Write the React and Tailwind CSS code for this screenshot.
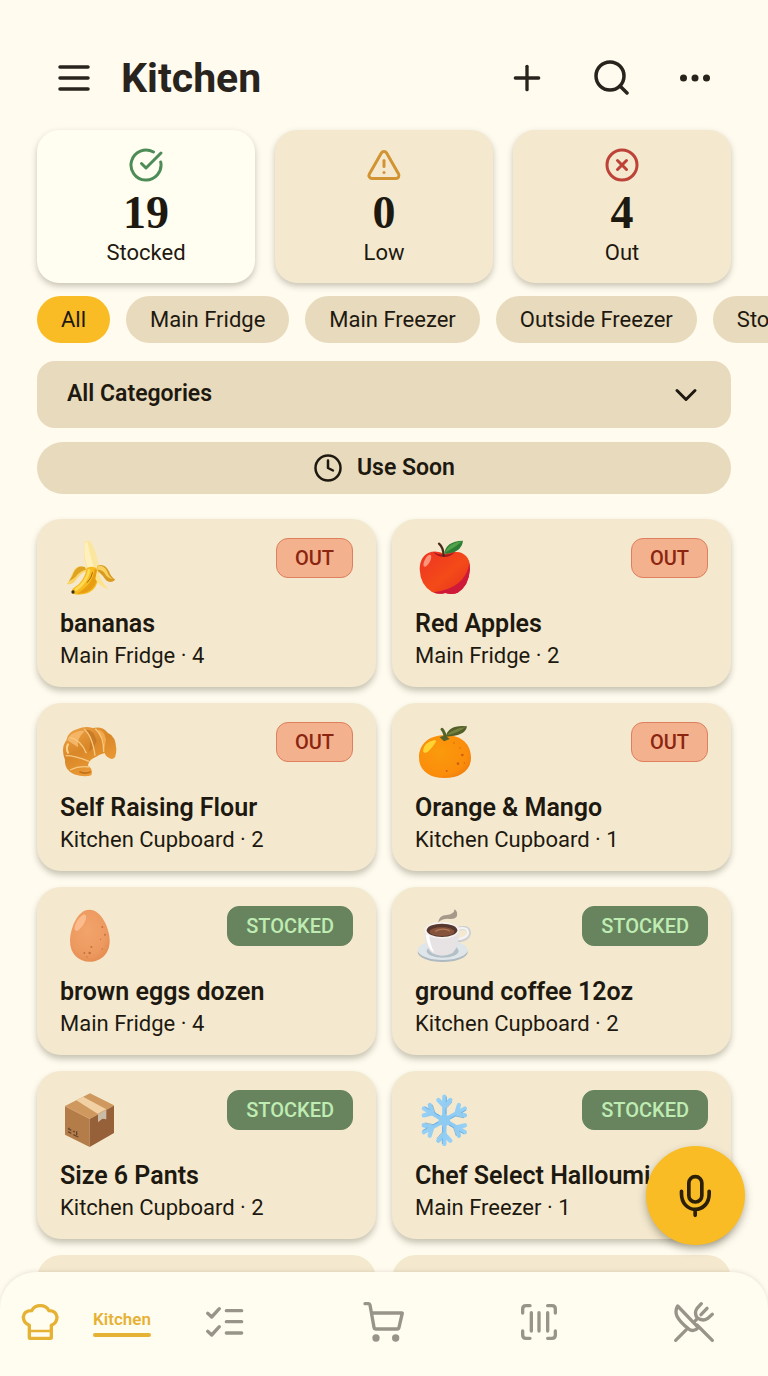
import { useState } from "react";
import { ChevronDown, CircleCheckBig, CircleX, Clock, Plus, TriangleAlert } from "lucide-react";

const stats = [
  { label: "Stocked", value: 19, icon: CircleCheckBig, card: "bg-[#fffef1]", color: "text-[#4d8c57]" },
  { label: "Low", value: 0, icon: TriangleAlert, card: "bg-[#f4e9cf]", color: "text-[#d29432]" },
  { label: "Out", value: 4, icon: CircleX, card: "bg-[#f4e9cf]", color: "text-[#bd4237]" },
];

const places = ["All", "Main Fridge", "Main Freezer", "Outside Freezer", "Storage"];

const items = [
  { name: "bananas", place: "Main Fridge", count: 4, status: "OUT", art: Banana },
  { name: "Red Apples", place: "Main Fridge", count: 2, status: "OUT", art: Apple },
  { name: "Self Raising Flour", place: "Kitchen Cupboard", count: 2, status: "OUT", art: Croissant },
  { name: "Orange & Mango", place: "Kitchen Cupboard", count: 1, status: "OUT", art: Orange },
  { name: "brown eggs dozen", place: "Main Fridge", count: 4, status: "STOCKED", art: Egg },
  { name: "ground coffee 12oz", place: "Kitchen Cupboard", count: 2, status: "STOCKED", art: Coffee },
  { name: "Size 6 Pants", place: "Kitchen Cupboard", count: 2, status: "STOCKED", art: Parcel },
  { name: "Chef Select Halloumi", place: "Main Freezer", count: 1, status: "STOCKED", art: Snowflake },
];

const badgeStyles = {
  OUT: "border-[#dc8060] bg-[#f4b18d] text-[#8b2511]",
  STOCKED: "border-[#67845f] bg-[#67845f] text-[#bfecb2]",
};

function Banana() {
  return (
    <svg viewBox="90 84 180 180" className="size-15" aria-hidden="true">
      <path d="M163 101Q164 92 174 91Q182 91 186 102Q202 132 207 172L173 184Q157 145 163 101Z" fill="#fbe6a0" />
      <path d="M172 94Q178 128 191 172L176 180Q160 140 164 101Z" fill="#fff0bd" />
      <path d="M165 173Q140 160 127 190Q119 214 110 222Q128 226 141 206Q152 190 170 182Z" fill="#fbd469" />
      <path d="M165 171Q144 164 133 184Q124 205 116 214Q132 208 143 193Q154 181 168 179Z" fill="#dda321" />
      <path d="M170 174Q164 213 134 232Q122 240 127 249Q133 256 158 253Q211 244 205 179Q191 164 170 174Z" fill="#f7bb22" />
      <path d="M194 176Q190 222 141 251Q202 253 205 183Z" fill="#e89e12" />
      <path d="M178 178Q171 218 136 240" fill="none" stroke="#ffdb55" strokeWidth="8" />
      <path d="M188 187Q184 206 171 218" fill="none" stroke="#a76c0b" strokeWidth="3" />
      <path d="M202 176Q212 216 236 238Q209 231 196 207Z" fill="#ffe28b" />
      <path d="M201 168Q223 158 237 184Q243 202 256 209Q241 222 228 211Q219 196 203 182Z" fill="#d89b20" />
      <path d="M202 168Q222 164 231 184Q237 202 249 208Q232 205 224 190Q216 178 203 179Z" fill="#fad15f" />
      <circle cx="129" cy="246" r="5" fill="#3d3013" />
    </svg>
  );
}

function Apple() {
  return (
    <svg viewBox="90 84 180 180" className="size-15" aria-hidden="true">
      <defs>
        <linearGradient id="apple" x1="0" y1="0" x2="1" y2="1">
          <stop offset="0" stopColor="#ed3324" />
          <stop offset="0.55" stopColor="#f44a18" />
          <stop offset="1" stopColor="#e42e20" />
        </linearGradient>
      </defs>
      <path d="M178 132Q198 121 224 127Q257 138 255 178Q251 229 218 248Q201 255 181 249Q159 255 141 246Q106 226 104 178Q104 135 140 125Q163 122 178 132Z" fill="url(#apple)" />
      <path d="M253 159Q242 235 145 247Q162 255 181 249Q201 255 218 248Q251 229 255 178Z" fill="#cf193b" />
      <path d="M145 126Q176 143 210 126Q196 142 176 141Q155 140 145 126Z" fill="#a71920" />
      <ellipse cx="127" cy="152" rx="8" ry="20" transform="rotate(28 127 152)" fill="#ff9578" />
      <path d="M176 137Q175 112 162 101" fill="none" stroke="#4a2b19" strokeWidth="7" strokeLinecap="round" />
      <path d="M178 131Q181 94 234 92Q229 130 178 131Z" fill="#2d7d35" />
      <path d="M180 128Q191 98 232 94Q210 113 180 128Z" fill="#52a24a" />
    </svg>
  );
}

function Croissant() {
  return (
    <svg viewBox="90 638 180 180" className="size-15" aria-hidden="true">
      <defs>
        <linearGradient id="crust" x1="0" y1="0" x2="0.6" y2="1">
          <stop offset="0" stopColor="#efa64a" />
          <stop offset="0.5" stopColor="#d98728" />
          <stop offset="1" stopColor="#ee9e38" />
        </linearGradient>
      </defs>
      <path d="M184 798Q162 805 132 795Q103 782 105 752Q91 716 109 693Q112 668 142 659Q166 649 188 656Q219 650 233 670Q258 680 259 720Q259 750 245 749Q228 745 224 731Q208 735 196 744Q176 752 174 769Q190 778 184 798Z" fill="url(#crust)" />
      <path d="M112 693Q116 674 141 667Q153 662 164 665Q138 690 144 714Q123 700 112 693Z" fill="#f5b566" />
      <path d="M168 661Q190 659 200 694Q192 718 175 727Q190 693 168 661Z" fill="#c97a24" />
      <path d="M201 661Q224 663 228 690L223 722Q223 684 201 661Z" fill="#f3aa4c" />
      <path d="M119 684Q153 691 169 732" fill="none" stroke="#f7c980" strokeWidth="4" />
      <path d="M162 659Q187 679 195 739M196 658Q222 681 221 728" fill="none" stroke="#f7c980" strokeWidth="4" />
      <path d="M107 739Q137 739 177 756M120 782Q147 769 178 773" fill="none" stroke="#f7c980" strokeWidth="4" />
      <path d="M114 730Q107 718 114 705" fill="none" stroke="#ffd488" strokeWidth="6" strokeLinecap="round" />
      <path d="M148 787Q169 796 182 787" fill="none" stroke="#c4721b" strokeWidth="5" />
    </svg>
  );
}

function Orange() {
  return (
    <svg viewBox="90 638 180 180" className="size-15" aria-hidden="true">
      <defs>
        <radialGradient id="orange" cx="0.4" cy="0.4" r="0.7">
          <stop offset="0" stopColor="#fb9a0c" />
          <stop offset="0.75" stopColor="#fb8d0b" />
          <stop offset="1" stopColor="#ef7c0b" />
        </radialGradient>
      </defs>
      <path d="M180 678C229 676 258 705 258 745C258 784 225 806 179 806C133 806 102 784 102 745C102 705 132 677 180 678Z" fill="url(#orange)" />
      <path d="M148 692Q114 700 114 726Q121 738 136 720Q151 702 154 694Z" fill="#ffd331" />
      <g fill="#ca6210">
        <circle cx="207" cy="701" r="2" /><circle cx="225" cy="716" r="2" />
        <circle cx="232" cy="737" r="4" /><circle cx="219" cy="763" r="4" />
        <circle cx="185" cy="785" r="3" /><circle cx="238" cy="761" r="2" />
      </g>
      <path d="M180 688Q181 671 171 660" fill="none" stroke="#55622b" strokeWidth="9" strokeLinecap="round" />
      <path d="M164 684Q181 674 194 689L177 696Z" fill="#55622b" />
      <path d="M182 682Q190 645 246 651Q241 681 182 682Z" fill="#526028" />
      <path d="M184 678Q210 655 242 654Q219 671 184 678Z" fill="#768041" />
    </svg>
  );
}

function Egg() {
  return (
    <svg viewBox="90 81 180 180" className="size-15" aria-hidden="true">
      <defs>
        <radialGradient id="egg" cx="0.45" cy="0.4" r="0.65">
          <stop offset="0" stopColor="#f2a46b" />
          <stop offset="0.7" stopColor="#ed9a60" />
          <stop offset="1" stopColor="#e58c51" />
        </radialGradient>
      </defs>
      <path d="M178 92C215 92 239 150 239 185C239 225 212 248 179 248C146 248 120 225 120 185C120 150 142 92 178 92Z" fill="url(#egg)" />
      <ellipse cx="151" cy="131" rx="11" ry="28" transform="rotate(32 151 131)" fill="#fbbb8c" />
      <g fill="#c8713d">
        <circle cx="217" cy="144" r="3" /><circle cx="225" cy="167" r="3" />
        <circle cx="212" cy="181" r="2" /><circle cx="184" cy="204" r="3" />
        <circle cx="163" cy="222" r="3" /><circle cx="179" cy="222" r="4" />
        <circle cx="217" cy="210" r="2" /><circle cx="171" cy="234" r="2" />
      </g>
    </svg>
  );
}

function Coffee() {
  return (
    <svg viewBox="90 81 180 180" className="size-15" aria-hidden="true">
      <ellipse cx="173" cy="219" rx="75" ry="30" fill="#afb9c1" />
      <ellipse cx="173" cy="213" rx="75" ry="30" fill="#dfe6ea" />
      <ellipse cx="173" cy="216" rx="48" ry="20" fill="#b4c0c8" />
      <path d="M215 151Q251 139 252 162Q249 184 213 184" fill="none" stroke="#cdcfd2" strokeWidth="12" />
      <path d="M215 150Q249 141 249 162Q247 178 214 181" fill="none" stroke="#f4f3f2" strokeWidth="7" />
      <path d="M119 154Q119 207 142 223Q172 238 203 222Q222 205 223 154Z" fill="#e7e3e4" />
      <path d="M122 166Q126 208 148 222Q133 190 133 168Z" fill="#fff" />
      <ellipse cx="171" cy="154" rx="52" ry="25" fill="#f6f3f1" />
      <ellipse cx="171" cy="154" rx="46" ry="20" fill="#58382e" />
      <ellipse cx="171" cy="158" rx="37" ry="13" fill="#86533c" />
      <path d="M151 157Q173 144 195 156" fill="none" stroke="#b47b58" strokeWidth="4" />
      <path d="M159 131Q162 109 185 108Q206 107 209 91Q220 99 215 113Q208 122 189 119Q169 119 159 131Z" fill="#a7988a" />
    </svg>
  );
}

function Parcel() {
  return (
    <svg viewBox="90 633 180 180" className="size-15" aria-hidden="true">
      <path d="M180 643L252 679L179 719L105 681Z" fill="#cf985e" />
      <path d="M105 681L179 719V804L105 767Z" fill="#b47c48" />
      <path d="M179 719L252 679V762L179 804Z" fill="#966038" />
      <path d="M139 664L159 653L229 691L204 705Z" fill="#f1d1a4" />
      <path d="M204 705L229 691V721L217 719L204 730Z" fill="#c9bba5" />
      <path d="M105 681L179 719L252 679" fill="none" stroke="#d8a46c" strokeWidth="2" />
      <path d="M114 749L124 754M114 758L124 763M129 756L135 759M130 767L145 774M140 757V768M117 746V752" stroke="#65472f" strokeWidth="4" />
    </svg>
  );
}

function Snowflake() {
  return (
    <svg viewBox="90 633 180 180" className="size-15" aria-hidden="true">
      <defs>
        <linearGradient id="ice" x1="100" y1="640" x2="250" y2="800" gradientUnits="userSpaceOnUse">
          <stop offset="0" stopColor="#a5dafa" />
          <stop offset="0.5" stopColor="#8bc8f1" />
          <stop offset="1" stopColor="#76b6e5" />
        </linearGradient>
      </defs>
      <g fill="none" stroke="url(#ice)" strokeWidth="13" strokeLinecap="round" strokeLinejoin="round">
        {[0, 60, 120, 180, 240, 300].map((turn) => (
          <path key={turn} d="M178 724.1L178.1 653M160 663L178 682L196 663" transform={`rotate(${turn} 178 724)`} />
        ))}
      </g>
      <g fill="none" stroke="#5ba3da" strokeWidth="2" strokeLinecap="round">
        {[0, 60, 120, 180, 240, 300].map((turn) => (
          <path key={turn} d="M183 704V689L200 670M184 668V654" transform={`rotate(${turn} 178 724)`} />
        ))}
      </g>
      <path d="M178 704L195 714V734L178 744L161 734V714Z" fill="#8ecbf3" />
    </svg>
  );
}

function ChefHatIcon() {
  return (
    <svg viewBox="64 174 117 114" className="h-[38px] w-[39px]" fill="none" stroke="currentColor" strokeWidth="10" strokeLinecap="round" strokeLinejoin="round" aria-hidden="true">
      <path d="M89 241Q71 233 71 216Q73 197 96 197Q104 182 122 182Q140 182 148 197Q169 197 172 216Q172 234 155 241V278Q155 280 153 280H91Q89 280 89 278Z" />
      <path d="M91 258H153" strokeWidth="7" />
    </svg>
  );
}

function ChecklistIcon() {
  return (
    <svg viewBox="616 174 120 114" className="h-[38px] w-10" fill="none" stroke="currentColor" strokeWidth="10" strokeLinecap="round" strokeLinejoin="round" aria-hidden="true">
      <path d="M624 205L636 216L659 191M624 259L636 270L659 245M680 197H726M680 230H726M680 264H726" />
    </svg>
  );
}

function CartIcon() {
  return (
    <svg viewBox="60 168 138 126" className="h-[42px] w-[46px]" fill="none" stroke="currentColor" strokeWidth="10" strokeLinecap="round" strokeLinejoin="round" aria-hidden="true">
      <path d="M78 176H89Q92 176 93 180L105 247Q106 252 111 252H174Q179 252 180 247L190 204H98" />
      <circle cx="111" cy="279" r="11" fill="currentColor" stroke="none" />
      <circle cx="170" cy="279" r="11" fill="currentColor" stroke="none" />
    </svg>
  );
}

function BarcodeIcon() {
  return (
    <svg viewBox="540 171 120 120" className="size-10" fill="none" stroke="currentColor" strokeWidth="10" strokeLinecap="round" strokeLinejoin="round" aria-hidden="true">
      <path d="M551 204V192Q551 182 561 182H573M626 182H639Q649 182 649 192V204M649 258V270Q649 280 639 280H626M573 280H561Q551 280 551 270V258" />
      <path d="M577 203V258M600 203V258M626 203V258" />
    </svg>
  );
}

function UtensilsIcon() {
  return (
    <svg viewBox="999 168 126 126" className="size-[42px]" fill="none" stroke="currentColor" strokeWidth="10" strokeLinecap="round" strokeLinejoin="round" aria-hidden="true">
      <path d="M1013 183Q1004 197 1011 214Q1020 232 1045 251Q1060 264 1075 248Z" />
      <path d="M1071 240L1117 286M1007 286L1039 254M1064 229L1072 221" />
      <path d="M1084 176L1071 190Q1062 203 1071 218Q1088 230 1102 221L1117 208M1101 190L1083 209" />
    </svg>
  );
}

function MicIcon() {
  return (
    <svg viewBox="880 876 104 138" className="h-[46px] w-[35px]" fill="none" stroke="currentColor" strokeWidth="11" strokeLinecap="round" aria-hidden="true">
      <rect x="912" y="887" width="39" height="76" rx="19" />
      <path d="M890 931V938C890 967 909 985 931 985C954 985 973 967 973 938V931M931 985V1003" />
    </svg>
  );
}

function Header() {
  return (
    <header className="flex h-[70px] items-center pr-4 pl-[21px] text-[#28241d]">
      <button type="button" aria-label="Menu">
        <svg viewBox="0 0 32 32" className="size-8" stroke="currentColor" strokeWidth="3.5" strokeLinecap="round" aria-hidden="true">
          <path d="M2 5H30M2 16H30M2 27H30" />
        </svg>
      </button>
      <h1 className="ml-[31px] flex-1 text-[41px] leading-12 font-bold">Kitchen</h1>
      <div className="flex items-center gap-11">
        <button type="button" aria-label="Add item" className="flex size-10 items-center justify-center">
          <Plus className="size-10" strokeWidth={2} />
        </button>
        <button type="button" aria-label="Search" className="flex size-10 items-center justify-center">
          <svg viewBox="0 0 36 36" className="size-9" fill="none" stroke="currentColor" strokeWidth="3.5" strokeLinecap="round" aria-hidden="true">
            <circle cx="17" cy="16" r="14" />
            <path d="M27 26L34 33" />
          </svg>
        </button>
        <button type="button" aria-label="More" className="flex size-10 items-center justify-center">
          <svg viewBox="0 0 32 8" className="h-2 w-8" fill="currentColor" aria-hidden="true">
            <circle cx="4.5" cy="4" r="3.5" />
            <circle cx="16" cy="4" r="3.5" />
            <circle cx="27.5" cy="4" r="3.5" />
          </svg>
        </button>
      </div>
    </header>
  );
}

function StatCard({ stat }) {
  const Icon = stat.icon;
  return (
    <div className={`flex flex-col items-center rounded-[22px] pt-[17px] pb-4 shadow-[0_3px_6px_rgba(70,65,40,0.3)] ${stat.card}`}>
      <Icon className={`mb-1 size-9 ${stat.color}`} strokeWidth={2} aria-hidden="true" />
      <p className="font-['Liberation_Serif',serif] text-[46px] leading-[52px] font-bold">{stat.value}</p>
      <p className="text-[22px] leading-7">{stat.label}</p>
    </div>
  );
}

function ItemCard({ item }) {
  const Art = item.art;
  return (
    <li className="rounded-3xl bg-[#f4e9cf] px-[23px] pt-[19px] pb-[15px] shadow-[0_4px_6px_rgba(70,65,40,0.3)]">
      <div className="mb-[10px] flex items-start justify-between">
        <Art />
        <span className={`rounded-xl border px-[18px] text-[20px] leading-[38px] font-medium ${badgeStyles[item.status]}`}>
          {item.status}
        </span>
      </div>
      <h2 className="truncate text-[25px] leading-8 font-semibold">{item.name}</h2>
      <p className="truncate text-[22px] leading-8">
        {item.place} · {item.count}
      </p>
    </li>
  );
}

function BottomNav() {
  return (
    <nav className="relative flex h-[104px] shrink-0 items-center rounded-t-[36px] bg-[#fffcf0] pr-[53px] pb-1 pl-[21px] shadow-[0_-1px_4px_rgba(70,65,40,0.12)]">
      <a href="#kitchen" aria-current="page" className="mr-[54px] flex w-[130px] items-center justify-between text-[#e6b234]">
        <ChefHatIcon />
        <span className="flex flex-col">
          <span className="text-[17px] leading-6 font-semibold">Kitchen</span>
          <span className="mt-0.5 h-1 rounded-full bg-[#e6b234]" />
        </span>
      </a>
      <div className="flex flex-1 items-center justify-between text-[#98948a]">
        <a href="#lists" aria-label="Lists"><ChecklistIcon /></a>
        <a href="#shopping" aria-label="Shopping"><CartIcon /></a>
        <a href="#scan" aria-label="Scan"><BarcodeIcon /></a>
        <a href="#meals" aria-label="Meals"><UtensilsIcon /></a>
      </div>
    </nav>
  );
}

function App() {
  const [place, setPlace] = useState("All");

  return (
    <div className="relative flex h-screen flex-col overflow-hidden bg-[#fffbef] font-[Roboto,sans-serif] text-[#1e1910]">
      <main className="min-h-0 flex-1 overflow-y-auto px-[37px] pt-[43px] [scrollbar-width:none]">
        <Header />

        <section className="mt-[17px] grid grid-cols-3 gap-5" aria-label="Stock summary">
          {stats.map((stat) => (
            <StatCard key={stat.label} stat={stat} />
          ))}
        </section>

        <div className="-mr-[37px] mt-[13px] flex gap-4 overflow-x-auto [scrollbar-width:none]">
          {places.map((name) => (
            <button
              key={name}
              type="button"
              aria-pressed={place === name}
              onClick={() => setPlace(name)}
              className={`shrink-0 rounded-full px-6 text-[22px] leading-[47px] ${place === name ? "bg-[#f9bc24]" : "bg-[#e8dabc]"}`}
            >
              {name}
            </button>
          ))}
        </div>

        <div className="relative mt-[18px]">
          <select
            aria-label="Category"
            className="block h-[67px] w-full appearance-none rounded-[18px] bg-[#e8dabc] px-[30px] text-[23px] font-semibold"
          >
            <option>All Categories</option>
          </select>
          <ChevronDown className="pointer-events-none absolute top-4 right-[27px] size-9" strokeWidth={2} aria-hidden="true" />
        </div>

        <button type="button" className="mt-[14px] flex h-[52px] w-full items-center justify-center gap-[14px] rounded-full bg-[#e8dabc] text-[23px] font-semibold">
          <Clock className="size-[30px]" strokeWidth={2} aria-hidden="true" />
          Use Soon
        </button>

        <ul className="mt-[25px] grid grid-cols-2 gap-4">
          {items.map((item) => (
            <ItemCard key={item.name} item={item} />
          ))}
          <li className="h-[168px] rounded-3xl bg-[#f4e9cf]" aria-hidden="true" />
          <li className="h-[168px] rounded-3xl bg-[#f4e9cf]" aria-hidden="true" />
        </ul>
      </main>

      <BottomNav />

      <button
        type="button"
        aria-label="Voice input"
        className="absolute right-[23px] bottom-[131px] flex size-[99px] items-center justify-center rounded-full bg-[#f9bc24] text-[#2b1f08] shadow-[0_4px_9px_rgba(70,65,40,0.4)]"
      >
        <MicIcon />
      </button>
    </div>
  );
}

export default App;
